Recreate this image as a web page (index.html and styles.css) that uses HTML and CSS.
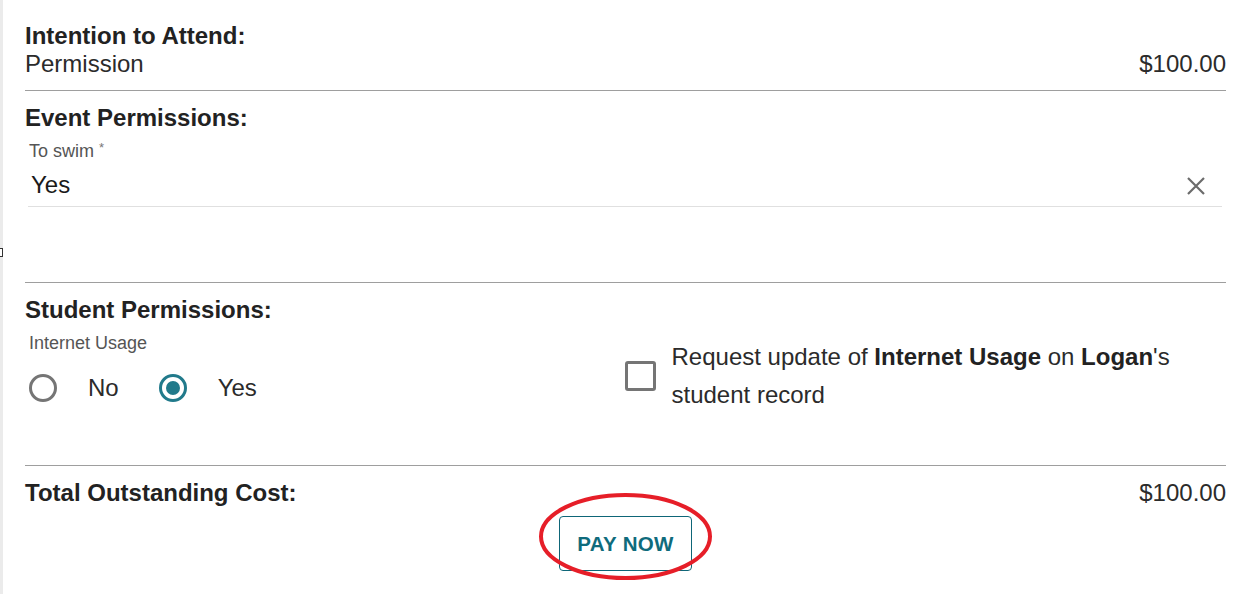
FILE: index.html
```html
<!DOCTYPE html>
<html lang="en">
<head>
<meta charset="utf-8">
<title>Permissions</title>
<link rel="stylesheet" href="styles.css">
</head>
<body>
<div class="page">
  <span class="edge-handle"></span>

  <section class="sec sec-first">
    <h2 class="heading">Intention to Attend:</h2>
    <div class="row">
      <span>Permission</span>
      <span>$100.00</span>
    </div>
  </section>

  <section class="sec sec-event">
    <h2 class="heading">Event Permissions:</h2>
    <div class="field-label">To swim <span class="req">*</span></div>
    <div class="field">
      <span class="field-value">Yes</span>
      <svg class="clear" width="18" height="18" viewBox="0 0 18 18" aria-hidden="true">
        <path d="M1 1 L17 17 M17 1 L1 17" stroke="#6b6b6b" stroke-width="2.2" fill="none"/>
      </svg>
    </div>
  </section>

  <section class="sec sec-student">
    <h2 class="heading">Student Permissions:</h2>
    <div class="cols">
      <div class="col-left">
        <div class="field-label">Internet Usage</div>
        <div class="radios">
          <label class="opt"><span class="radio"></span><span>No</span></label>
          <label class="opt"><span class="radio checked"></span><span>Yes</span></label>
        </div>
      </div>
      <div class="col-right">
        <span class="checkbox"></span>
        <p class="check-text">Request update of <b>Internet Usage</b> on <b>Logan</b>'s student record</p>
      </div>
    </div>
  </section>

  <section class="sec sec-total">
    <div class="row">
      <h2 class="heading">Total Outstanding Cost:</h2>
      <span>$100.00</span>
    </div>
    <div class="pay-wrap">
      <div class="pay">
        <button class="pay-btn">PAY NOW</button>
        <svg class="ring" width="173" height="87" viewBox="0 0 173 87" aria-hidden="true">
          <ellipse cx="86.5" cy="43.5" rx="84.5" ry="41.5" fill="none" stroke="#e61e28" stroke-width="4"/>
        </svg>
      </div>
    </div>
  </section>
</div>
</body>
</html>
```

FILE: styles.css
```css
* { box-sizing: border-box; }

html, body {
  margin: 0;
  padding: 0;
  background: #fff;
}

body {
  font-family: "Liberation Sans", Arial, sans-serif;
  font-size: 24px;
  line-height: 28px;
  color: #2b2b2b;
}

.page {
  position: relative;
  min-height: 594px;
  border-left: 3px solid #ebebeb;
  padding: 0 19px 0 22px;
}

.edge-handle {
  position: absolute;
  left: -3px;
  top: 248px;
  width: 3px;
  height: 9px;
  border: 1px solid #333;
  border-left: none;
  background: #fff;
}

.sec {
  border-bottom: 1px solid #9e9e9e;
  padding-top: 13px;
}

.sec-first {
  padding-top: 22px;
  padding-bottom: 12px;
}

.sec-event { padding-bottom: 75px; }

.sec-student { padding-bottom: 51px; }

.sec-total { border-bottom: none; }

.heading {
  margin: 0;
  font-size: 24px;
  line-height: 28px;
  font-weight: bold;
  color: #222;
}

.row {
  display: flex;
  justify-content: space-between;
  align-items: center;
}

.field-label {
  margin-top: 9px;
  margin-left: 4px;
  font-size: 18px;
  line-height: 20px;
  color: #555;
}

.req {
  font-size: 13px;
  vertical-align: top;
  line-height: 14px;
  color: #777;
}

.field {
  display: flex;
  align-items: center;
  justify-content: space-between;
  margin: 0 4px 0 3px;
  padding: 10px 17px 7px 3px;
  border-bottom: 1px solid #e0e0e0;
  color: #1a1a1a;
}

.clear { display: block; margin-top: 2px; }

.cols {
  display: grid;
  grid-template-columns: 1fr 1fr;
}

.radios {
  display: flex;
  margin-top: 21px;
  margin-left: 4px;
}

.opt {
  display: flex;
  align-items: center;
  gap: 31px;
  margin-right: 40px;
  height: 28px;
}

.radio {
  width: 28px;
  height: 28px;
  border-radius: 50%;
  border: 3px solid #757575;
  display: flex;
  align-items: center;
  justify-content: center;
}

.radio.checked { border-color: #217a8b; }

.radio.checked::after {
  content: "";
  width: 14px;
  height: 14px;
  border-radius: 50%;
  background: #217a8b;
}

.col-right {
  display: flex;
  align-items: flex-start;
  gap: 16px;
  padding-top: 14px;
}

.checkbox {
  flex: none;
  width: 31px;
  height: 30px;
  margin-top: 23px;
  margin-left: -1px;
  border: 3px solid #757575;
  border-radius: 3px;
}

.check-text {
  margin: 0;
  line-height: 38px;
}

.check-text b { color: #222; }

.pay-wrap {
  display: flex;
  justify-content: center;
  margin-top: 9px;
}

.pay { position: relative; }

.pay-btn {
  display: block;
  height: 55px;
  padding: 0 17.5px;
  border: 1px solid #0e6678;
  border-radius: 4px;
  background: #fff;
  font-family: "Liberation Sans", Arial, sans-serif;
  font-size: 20.5px;
  font-weight: bold;
  letter-spacing: 0.3px;
  color: #0f6b7c;
}

.ring {
  position: absolute;
  left: -20px;
  top: -23px;
  pointer-events: none;
}
```
